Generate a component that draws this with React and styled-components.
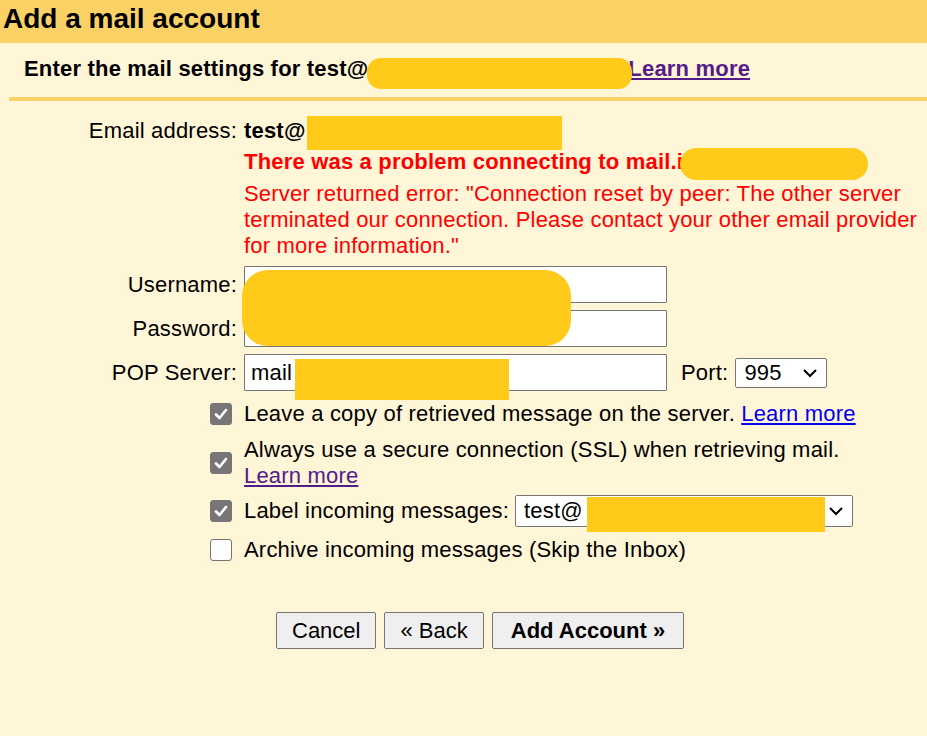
import React from "react";
import styled, { createGlobalStyle } from "styled-components";

const GlobalStyle = createGlobalStyle`
  body {
    margin: 0;
    background: #fff5d7;
    font-family: "Liberation Sans", Arial, sans-serif;
    color: #000;
  }
`;

const TitleBar = styled.div`
  height: 43px;
  box-sizing: border-box;
  padding-left: 3px;
  background: #f9d165;
  font-size: 28px;
  font-weight: bold;
  line-height: 38px;
`;

const SubHeader = styled.div`
  height: 54px;
  box-sizing: border-box;
  padding: 13px 0 0 24px;
  font-size: 22px;
  font-weight: bold;
  line-height: 26px;
  letter-spacing: 0.19px;
  white-space: nowrap;
`;

const Divider = styled.div`
  margin-left: 9px;
  height: 4px;
  background: #f9d165;
`;

const Link = styled.a`
  color: ${(p) => (p.$visited ? "#551a8b" : "#0000ee")};
  text-decoration: underline;
  cursor: pointer;
`;

/* yellow mark hiding private data, keeps its width in the text flow */
const Redact = styled.span`
  display: inline-block;
  vertical-align: top;
  position: relative;
  width: ${(p) => p.$w}px;
  height: 26px;
  margin-left: ${(p) => p.$ml || 0}px;
  margin-right: ${(p) => p.$mr || 0}px;

  &::before {
    content: "";
    position: absolute;
    left: 0;
    right: 0;
    top: ${(p) => p.$top}px;
    bottom: ${(p) => p.$bottom}px;
    background: #ffca1a;
    border-radius: ${(p) => p.$r || 0}px;
  }
`;

/* yellow mark laid over form controls */
const Cover = styled.div`
  position: absolute;
  left: ${(p) => p.$x}px;
  top: ${(p) => p.$y}px;
  width: ${(p) => p.$w}px;
  height: ${(p) => p.$h}px;
  border-radius: ${(p) => p.$r || 0}px;
  background: #ffca1a;
  pointer-events: none;
`;

const Form = styled.div`
  padding-top: 17px;
  font-size: 22px;
  line-height: 26px;
  letter-spacing: 0.19px;
`;

const Row = styled.div`
  display: grid;
  grid-template-columns: 237px 1fr;
  column-gap: 7px;
  align-items: center;
  margin-top: ${(p) => p.$mt || 0}px;
`;

const Label = styled.div`
  text-align: right;
  white-space: nowrap;
`;

const Value = styled.div`
  font-weight: ${(p) => (p.$bold ? "bold" : "normal")};
`;

const ErrorTitle = styled.div`
  margin-top: 5px;
  color: #ff0000;
  font-weight: bold;
  white-space: nowrap;
`;

const ErrorText = styled.div`
  margin-top: 6px;
  color: #ff0000;
`;

const Group = styled.div`
  position: relative;
`;

const Field = styled.div`
  display: flex;
  align-items: center;
`;

const TextInput = styled.input`
  width: 423px;
  height: 37px;
  box-sizing: border-box;
  border: 1px solid #767676;
  border-radius: 1px;
  background: #fff;
  padding: 0 6px;
  font-family: inherit;
  font-size: 22px;
  letter-spacing: 0.19px;
  color: #000;
  outline: none;
`;

const PortLabel = styled.span`
  margin-left: 14px;
  margin-right: 7px;
`;

const SelectBox = styled.div`
  position: relative;
  display: inline-flex;
  align-items: center;
  justify-content: space-between;
  box-sizing: border-box;
  width: ${(p) => p.$w}px;
  height: ${(p) => p.$h}px;
  padding: 0 8px 0 8px;
  border: 1px solid #767676;
  border-radius: 2px;
  background: #fff;
  margin-left: ${(p) => p.$ml || 0}px;
`;

const Chevron = () => (
  <svg width="16" height="10" viewBox="0 0 16 10">
    <path d="M2 2 L8 8 L14 2" fill="none" stroke="#000" strokeWidth="2" />
  </svg>
);

const CheckCell = styled.div`
  justify-self: end;
  margin-right: 5px;
  display: flex;
`;

const Box = styled.span`
  display: inline-flex;
  align-items: center;
  justify-content: center;
  width: 22px;
  height: 22px;
  box-sizing: border-box;
  border-radius: 3px;
  border: 1px solid #767676;
  background: ${(p) => (p.$checked ? "#767676" : "#fff")};
`;

const CheckBox = ({ checked }) => (
  <Box $checked={checked}>
    {checked && (
      <svg width="16" height="16" viewBox="0 0 16 16">
        <path
          d="M3 8.5 L6.5 12 L13 4"
          fill="none"
          stroke="#fff"
          strokeWidth="2.6"
          strokeLinecap="round"
          strokeLinejoin="round"
        />
      </svg>
    )}
  </Box>
);

const Buttons = styled.div`
  display: flex;
  gap: 8px;
  margin-top: 49px;
  padding-left: 276px;
`;

const Button = styled.button`
  height: 37px;
  padding: 0 ${(p) => (p.$primary ? 18 : 15)}px;
  background: #efefef;
  border: 1px solid #767676;
  border-radius: 2px;
  font-family: inherit;
  font-size: 22px;
  font-weight: ${(p) => (p.$primary ? "bold" : "normal")};
  color: #000;
  cursor: pointer;
`;

export default function App() {
  return (
    <>
      <GlobalStyle />
      <TitleBar>Add a mail account</TitleBar>
      <SubHeader>
        Enter the mail settings for test@
        <Redact $w={265} $top={2} $bottom={-7} $r={14} $ml={-1} $mr={-4} />
        <Link $visited>Learn more</Link>
      </SubHeader>
      <Divider />
      <Form>
        <Row>
          <Label>Email address:</Label>
          <Value $bold>
            test@
            <Redact $w={255} $top={-2} $bottom={-6} $ml={1} />
          </Value>
        </Row>
        <Row>
          <div />
          <div>
            <ErrorTitle>
              There was a problem connecting to mail.i
              <Redact $w={188} $top={-1} $bottom={-5} $r={16} $ml={-3} />
            </ErrorTitle>
            <ErrorText>
              Server returned error: "Connection reset by peer: The other server
              terminated our connection. Please contact your other email provider
              for more information."
            </ErrorText>
          </div>
        </Row>
        <Group>
          <Row $mt={7}>
            <Label>Username:</Label>
            <Field>
              <TextInput type="text" readOnly />
            </Field>
          </Row>
          <Row $mt={7}>
            <Label>Password:</Label>
            <Field>
              <TextInput type="password" readOnly />
            </Field>
          </Row>
          <Cover $x={242} $y={4} $w={329} $h={76} $r={26} />
        </Group>
        <Group>
          <Row $mt={7}>
            <Label>POP Server:</Label>
            <Field>
              <TextInput type="text" defaultValue="mail" readOnly />
              <PortLabel>Port:</PortLabel>
              <SelectBox $w={92} $h={30}>
                995
                <Chevron />
              </SelectBox>
            </Field>
          </Row>
          <Cover $x={295} $y={5} $w={214} $h={41} />
        </Group>
        <Row $mt={10}>
          <CheckCell>
            <CheckBox checked />
          </CheckCell>
          <div>
            Leave a copy of retrieved message on the server. <Link>Learn more</Link>
          </div>
        </Row>
        <Row $mt={10}>
          <CheckCell>
            <CheckBox checked />
          </CheckCell>
          <div>
            Always use a secure connection (SSL) when retrieving mail.
            <br />
            <Link $visited>Learn more</Link>
          </div>
        </Row>
        <Row $mt={6}>
          <CheckCell>
            <CheckBox checked />
          </CheckCell>
          <Field>
            Label incoming messages:
            <SelectBox $w={338} $h={32} $ml={6}>
              test@
              <Chevron />
              <Cover $x={71} $y={1} $w={238} $h={35} />
            </SelectBox>
          </Field>
        </Row>
        <Row $mt={10}>
          <CheckCell>
            <CheckBox />
          </CheckCell>
          <div>Archive incoming messages (Skip the Inbox)</div>
        </Row>
        <Buttons>
          <Button>Cancel</Button>
          <Button>« Back</Button>
          <Button $primary>Add Account »</Button>
        </Buttons>
      </Form>
    </>
  );
}
